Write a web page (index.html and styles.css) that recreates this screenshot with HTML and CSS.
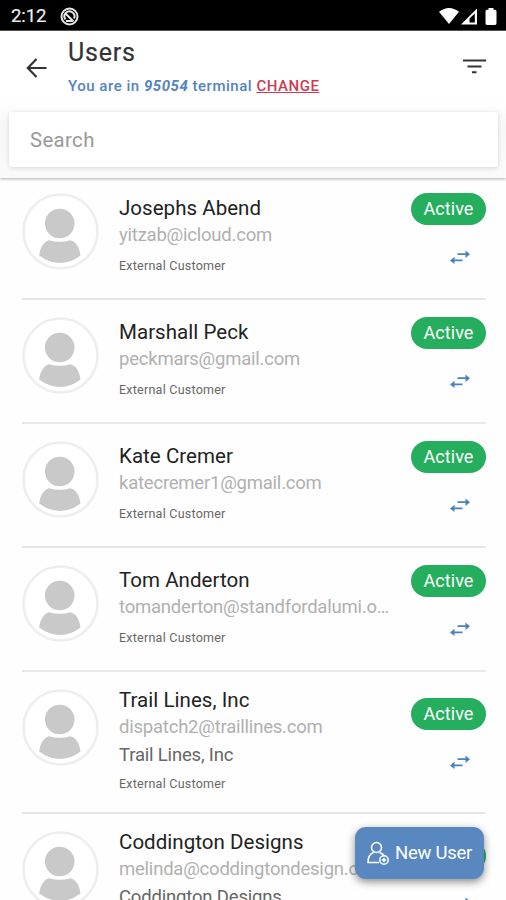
FILE: index.html
```html
<!DOCTYPE html>
<html lang="en">
<head>
<meta charset="utf-8">
<title>Users</title>
<link rel="stylesheet" href="styles.css">
</head>
<body>
<svg class="defs" width="0" height="0" aria-hidden="true">
  <symbol id="person" viewBox="0 0 77 77">
    <circle cx="38.5" cy="38.5" r="37" fill="#fff" stroke="#eeeeee" stroke-width="2.6"/>
    <circle cx="37.700" cy="30.500" r="14.800" fill="#c9c9c9"/>
    <path d="M27 47.200Q37.700 50.400 48.500 47.200C54 48.500 57.500 54 58.500 62.500Q49 70 38 70T17.200 62.500C18.200 54 22 48.500 27 47.200Z" fill="#c9c9c9"/>
  </symbol>
  <symbol id="swap" viewBox="0 0 20 14">
    <path d="M7.500 4.200H16M12.500 10.400H4" fill="none" stroke="#4a82c0" stroke-width="1.800"/>
    <path d="M15.500.5 20 4.200 15.500 7.900ZM4.500 6.700 0 10.400 4.500 14Z" fill="#4a82c0"/>
  </symbol>
</svg>
<div class="screen">
  <div class="status">
    <span class="time">2:12</span>
    <svg class="dnd" width="19" height="19" viewBox="0 0 19 19" fill="none" stroke="#e8e8e8">
      <circle cx="9.500" cy="9.500" r="8" stroke-width="2"/>
      <path d="M5.500 12.500A5 5 0 1 1 14 11.500" stroke-width="2"/>
      <path d="M5.500 6.500 13.500 14.500M6 14H12" stroke-width="2"/>
    </svg>
    <svg class="signals" width="60" height="19" viewBox="0 0 60 19">
      <path d="M0 4.800Q10 -3 20 4.800L10 17Z" fill="#fff"/>
      <path d="M22 17.500 38 1.500V17.500Z" fill="#fff"/>
      <path d="M30.500 15.500V11.500L35.800 6.500V15.500Z" fill="#000"/>
      <path d="M49.500 1H54.500V2.800H56Q57.500 2.800 57.500 4.500V16Q57.500 18 56 18H48Q46.500 18 46.500 16V4.500Q46.500 2.800 48 2.800H49.500Z" fill="#fff"/>
    </svg>
  </div>
  <header class="header">
    <div class="bar">
      <svg class="back" width="21" height="20" viewBox="0 0 21 20" fill="none" stroke="#333" stroke-width="2.200"><path d="M20.500 10H2M10.500 1 1.800 10 10.500 19"/></svg>
      <div class="heading">
        <h1>Users</h1>
        <p class="where">You are in <i>95054</i> terminal <a>CHANGE</a></p>
      </div>
      <svg class="filter" width="23" height="15" viewBox="0 0 23 15" stroke="#333" stroke-width="2"><path d="M0 1.500H23M4.500 7.500H18.500M9 13.300H13.500"/></svg>
    </div>
    <div class="search">Search</div>
  </header>
  <main class="list">
    <article class="row"><svg class="avatar"><use href="#person"/></svg><div class="info"><h2>Josephs Abend</h2><p class="mail">yitzab@icloud.com</p><p class="kind">External Customer</p></div><div class="side"><span class="badge">Active</span><svg class="swap"><use href="#swap"/></svg></div></article>
    <article class="row"><svg class="avatar"><use href="#person"/></svg><div class="info"><h2>Marshall Peck</h2><p class="mail">peckmars@gmail.com</p><p class="kind">External Customer</p></div><div class="side"><span class="badge">Active</span><svg class="swap"><use href="#swap"/></svg></div></article>
    <article class="row"><svg class="avatar"><use href="#person"/></svg><div class="info"><h2>Kate Cremer</h2><p class="mail">katecremer1@gmail.com</p><p class="kind">External Customer</p></div><div class="side"><span class="badge">Active</span><svg class="swap"><use href="#swap"/></svg></div></article>
    <article class="row"><svg class="avatar"><use href="#person"/></svg><div class="info"><h2>Tom Anderton</h2><p class="mail">tomanderton@standfordalumi.o…</p><p class="kind">External Customer</p></div><div class="side"><span class="badge">Active</span><svg class="swap"><use href="#swap"/></svg></div></article>
    <article class="row tall"><svg class="avatar"><use href="#person"/></svg><div class="info"><h2>Trail Lines, Inc</h2><p class="mail">dispatch2@traillines.com</p><p class="company">Trail Lines, Inc</p><p class="kind">External Customer</p></div><div class="side"><span class="badge">Active</span><svg class="swap"><use href="#swap"/></svg></div></article>
    <article class="row tall"><svg class="avatar"><use href="#person"/></svg><div class="info"><h2>Coddington Designs</h2><p class="mail">melinda@coddingtondesign.c…</p><p class="company">Coddington Designs</p></div><div class="side"><span class="badge"></span><svg class="swap"><use href="#swap"/></svg></div></article>
  </main>
  <button class="new-user">
    <svg width="23" height="25" viewBox="0 0 23 25" fill="none" stroke="#fff" stroke-width="1.500">
      <circle cx="9.500" cy="6.500" r="5"/>
      <path d="M6.500 11.500C2.500 13 1 16 1 21.500H12M12.500 11.500Q15.500 12.500 16.800 14.500"/>
      <circle cx="17" cy="19" r="4.200"/><path d="M17 16.800V21.200M14.800 19H19.200"/>
    </svg>
    <span>New User</span>
  </button>
</div>
</body>
</html>
```
FILE: styles.css
```css
* { box-sizing: border-box; }
body { margin: 0; background: #fff; font-family: Roboto, sans-serif; }
h1, h2, p { margin: 0; font-weight: 400; white-space: nowrap; }
.defs { position: absolute; }
.screen { position: relative; width: 506px; height: 900px; overflow: hidden; background: #fefefe; }
.status { display: flex; align-items: center; height: 31px; padding: 2px 7px 0 11px; background: #000; border-bottom: 1px solid #555; color: #eee; }
.time { font-size: 18.500px; width: 49px; letter-spacing: -.1px; -webkit-text-stroke: .2px #eee; }
.signals { margin-left: auto; }
.header { height: 147px; background: linear-gradient(#fff 70px, #f7f7f7 95px, #fafafa); box-shadow: 0 1px 3px rgba(0,0,0,.32); }
.bar { display: flex; height: 80px; padding: 0 20px 0 26px; }
.back { margin-top: 27px; }
.heading { flex: 1; padding-left: 21px; }
h1 { margin-top: 6px; font-size: 25px; line-height: 31px; letter-spacing: .8px; color: #333; -webkit-text-stroke: .2px #333; }
.where { margin-top: 8px; font-size: 15px; line-height: 20px; font-weight: 500; letter-spacing: .52px; color: #5484bf; }
.where i { font-weight: 700; }
.where a { color: #ce3b51; text-decoration: underline; }
.filter { margin-top: 28px; }
.search { height: 55px; margin: 1px 8px 0 9px; padding-left: 21px; border-radius: 3px; background: #fff; box-shadow: 0 1px 5px rgba(0,0,0,.14); font-size: 20.300px; line-height: 56px; letter-spacing: .4px; color: #999; }
.list { margin: -2px 20px 0 22px; }
.row { display: flex; height: 124.100px; padding-top: 17px; border-bottom: 2px solid #e8e8e8; }
.row.tall { height: 142px; }
.avatar { flex: none; width: 77px; height: 77px; }
.info { flex: 1; min-width: 0; padding-left: 20px; }
.tall .info { margin-top: -4px; }
h2 { height: 28px; font-size: 20.500px; line-height: 30px; letter-spacing: .04px; color: #222; }
.mail { height: 30px; font-size: 18.500px; line-height: 29px; letter-spacing: -.22px; color: #b0b0b0; }
.company { height: 28px; margin-top: -2px; font-size: 18.500px; line-height: 29px; letter-spacing: -.18px; color: #666; }
.kind { font-size: 12.500px; line-height: 30px; letter-spacing: .24px; color: #666; }
.side { flex: none; width: 75px; }
.badge { display: block; height: 32px; border-radius: 16px; background: #25ae5d; font-size: 18px; line-height: 31px; letter-spacing: .05px; text-align: center; color: #fff; }
.tall .side { padding-top: 9px; }
.swap { display: block; width: 20px; height: 14px; margin: 24.500px 0 0 39px; }
.new-user { position: absolute; left: 355px; top: 827px; display: flex; align-items: center; width: 129px; height: 52px; padding: 0 0 0 12px; gap: 5px; border: 0; border-radius: 11px; background: #5988c1; box-shadow: 0 3px 9px rgba(0,0,0,.45); font: 18.500px Roboto, sans-serif; letter-spacing: -.25px; color: #fff; white-space: nowrap; }
```
